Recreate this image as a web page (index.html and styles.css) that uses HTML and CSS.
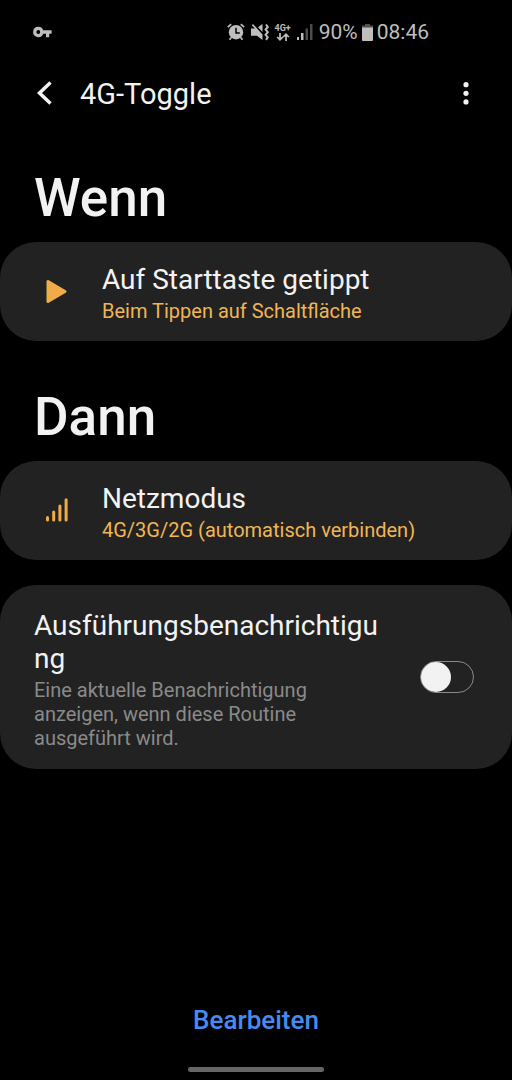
FILE: index.html
```html
<!DOCTYPE html>
<html lang="de">
<head>
<meta charset="utf-8">
<meta name="viewport" content="width=device-width, initial-scale=1">
<title>4G-Toggle</title>
<link rel="stylesheet" href="styles.css">
</head>
<body>
<div class="screen">
  <div class="status">
    <svg width="20" height="12" viewBox="0 0 20 12" aria-hidden="true">
      <path fill="currentColor" fill-rule="evenodd" d="M5.3.8a5.2 5.2 0 1 0 4.9 7H13v3.4h3.2V7.800H18.600V4.200H10.200A5.200 5.200 0 0 0 5.300.800zM5.300 4.100a1.900 1.900 0 1 1 0 3.800a1.900 1.900 0 0 1 0-3.800z"/>
    </svg>
    <div class="status-right">
      <svg width="18" height="18" viewBox="0 0 18 18" aria-hidden="true">
        <circle cx="9" cy="9.200" r="7.200" fill="currentColor"/>
        <path d="M.8 4.200L4.200 1.200M17.200 4.200L13.800 1.200M4.200 14.500L2.600 16.800M13.800 14.500L15.400 16.800" stroke="currentColor" stroke-width="1.700" fill="none"/>
        <path d="M9 4.800V10H12.800" stroke="#000" stroke-width="1.500" fill="none"/>
      </svg>
      <svg width="18" height="18" viewBox="0 0 18 18" aria-hidden="true">
        <path fill="currentColor" d="M0 5.500H4L.8 2.300L2 1L11.500 11.500V17L6 12.800H0zM7 4.200L11.500 1V8.900z"/>
        <path d="M15 1.500L16.800 4L14.600 6.600L16.800 9.200L14.600 11.800L16.800 14.300L15 16.800" stroke="currentColor" stroke-width="2" fill="none"/>
      </svg>
      <div class="network">
        <span>4G+</span>
        <svg width="14" height="8" viewBox="0 0 14 8" aria-hidden="true">
          <path d="M4 0V6.500M1.200 4L4 6.800L6.800 4M10 8V1.500M7.200 4L10 1.200L12.800 4" stroke="currentColor" stroke-width="1.700" fill="none"/>
        </svg>
      </div>
      <svg width="16" height="16" viewBox="0 0 16 16" aria-hidden="true">
        <path fill="currentColor" d="M0 13h2v3H0zM4 9h2.500v7H4z"/>
        <path fill="#4c4c4c" d="M8.500 4.500H11V16H8.500zM13 0h2.500v16H13z"/>
      </svg>
      <div class="battery">
        <span>90%</span>
        <svg width="11" height="17" viewBox="0 0 11 17" aria-hidden="true">
          <path fill="#505050" d="M3 0H8V1.500H11V4H0V1.500H3z"/>
          <path fill="currentColor" d="M0 3.500H11V16Q11 17 10 17H1Q0 17 0 16z"/>
        </svg>
        <span>08:46</span>
      </div>
    </div>
  </div>

  <header class="appbar">
    <button class="icon-button" type="button" aria-label="Zurück">
      <svg width="18" height="26" viewBox="0 0 18 26" aria-hidden="true">
        <path d="M14.500 1.500L3.500 12L14.500 22.500" fill="none" stroke="currentColor" stroke-width="3.500"/>
      </svg>
    </button>
    <h1 class="title">4G-Toggle</h1>
    <button class="icon-button" type="button" aria-label="Weitere Optionen">
      <svg width="6" height="24" viewBox="0 0 6 24" fill="currentColor" aria-hidden="true">
        <circle cx="3" cy="2.700" r="2.600"/><circle cx="3" cy="11.300" r="2.600"/><circle cx="3" cy="19.900" r="2.600"/>
      </svg>
    </button>
  </header>

  <main class="content">
    <section class="group">
      <h2 class="heading">Wenn</h2>
      <button class="card card-row" type="button">
        <svg class="card-icon" width="24" height="28" viewBox="0 0 24 28" aria-hidden="true">
          <path d="M3 2.500V22.500L20 12.500z" fill="currentColor" stroke="currentColor" stroke-width="3" stroke-linejoin="round"/>
        </svg>
        <span class="card-text">
          <span class="label">Auf Starttaste getippt</span>
          <span class="detail accent">Beim Tippen auf Schaltfläche</span>
        </span>
      </button>
    </section>

    <section class="group">
      <h2 class="heading">Dann</h2>
      <button class="card card-row" type="button">
        <svg class="card-icon" width="24" height="28" viewBox="0 0 24 28" aria-hidden="true">
          <path d="M2.500 19.500V22M8.700 14V22M14.900 8V22M21.100 1.800V22" stroke="currentColor" stroke-width="3" stroke-linecap="round"/>
        </svg>
        <span class="card-text">
          <span class="label">Netzmodus</span>
          <span class="detail accent">4G/3G/2G (automatisch verbinden)</span>
        </span>
      </button>
    </section>

    <label class="card card-switch">
      <span class="card-text">
        <span class="label">Ausführungsbenachrichtigung</span>
        <span class="detail">Eine aktuelle Benachrichtigung anzeigen, wenn diese Routine ausgeführt wird.</span>
      </span>
      <input class="switch" type="checkbox" role="switch">
    </label>
  </main>

  <footer class="footer">
    <button class="edit" type="button">Bearbeiten</button>
    <div class="home-bar"></div>
  </footer>
</div>
</body>
</html>
```
FILE: styles.css
```css
* {
  box-sizing: border-box;
}

body {
  margin: 0;
  background: #000;
  color: #f2f2f2;
  font-family: Roboto, "Liberation Sans", sans-serif;
}

button {
  padding: 0;
  border: 0;
  background: none;
  color: inherit;
  font: inherit;
  text-align: left;
}

svg {
  display: block;
  flex: none;
}

.screen {
  display: flex;
  flex-direction: column;
  min-height: 100vh;
}

.status {
  display: flex;
  align-items: center;
  justify-content: space-between;
  height: 64px;
  padding: 0 83px 0 33px;
  color: #bebebe;
  font-size: 21px;
}

.status-right {
  display: flex;
  align-items: center;
  gap: 6px;
}

.network {
  display: flex;
  flex-direction: column;
  align-items: center;
  font-size: 9px;
  font-weight: 700;
  line-height: 10px;
}

.battery {
  display: flex;
  align-items: center;
  gap: 4px;
}

.appbar {
  display: flex;
  align-items: center;
  height: 60px;
  padding: 0 34px 0 33px;
}

.icon-button {
  display: flex;
  align-items: center;
  justify-content: center;
  width: 24px;
  height: 48px;
}

.title {
  flex: 1;
  margin: 0 0 0 23px;
  font-size: 29px;
  font-weight: 400;
}

.content {
  display: flex;
  flex-direction: column;
  gap: 25px;
  padding-top: 42px;
}

.group + .group {
  margin-top: 19px;
}

.heading {
  margin: 0 0 12px;
  padding: 0 34px;
  font-size: 53px;
  font-weight: 500;
  line-height: 64px;
}

.card {
  display: flex;
  align-items: center;
  width: 100%;
  border-radius: 36px;
  background: #222;
}

.card-row {
  gap: 33px;
  padding: 21px 34px 18px 45px;
}

.card-switch {
  gap: 36px;
  padding: 0 38px 0 34px;
}

.card-switch .card-text {
  padding: 24px 0 19px;
}

.card-icon {
  color: #f0ac48;
}

.card-text {
  display: flex;
  flex: 1;
  flex-direction: column;
  gap: 3px;
  min-width: 0;
}

.label {
  font-size: 28px;
  line-height: 33px;
  overflow-wrap: anywhere;
}

.detail {
  color: #8a8a8a;
  font-size: 20px;
  line-height: 24px;
}

.accent {
  color: #f0b654;
}

.switch {
  display: flex;
  flex: none;
  align-items: center;
  width: 54px;
  height: 32px;
  margin: 0;
  border: 1px solid #8a8a8a;
  border-radius: 16px;
  appearance: none;
}

.switch::before {
  width: 30px;
  height: 30px;
  border-radius: 50%;
  background: #f2f2f2;
  content: "";
}

.switch:checked {
  justify-content: flex-end;
  background: #3e82f0;
}

.footer {
  display: flex;
  flex-direction: column;
  align-items: center;
  gap: 29px;
  margin-top: auto;
  padding-bottom: 8px;
}

.edit {
  color: #468cf0;
  font-size: 26px;
  font-weight: 500;
  line-height: 36px;
}

.home-bar {
  width: 136px;
  height: 5px;
  border-radius: 3px;
  background: #666;
}
```
